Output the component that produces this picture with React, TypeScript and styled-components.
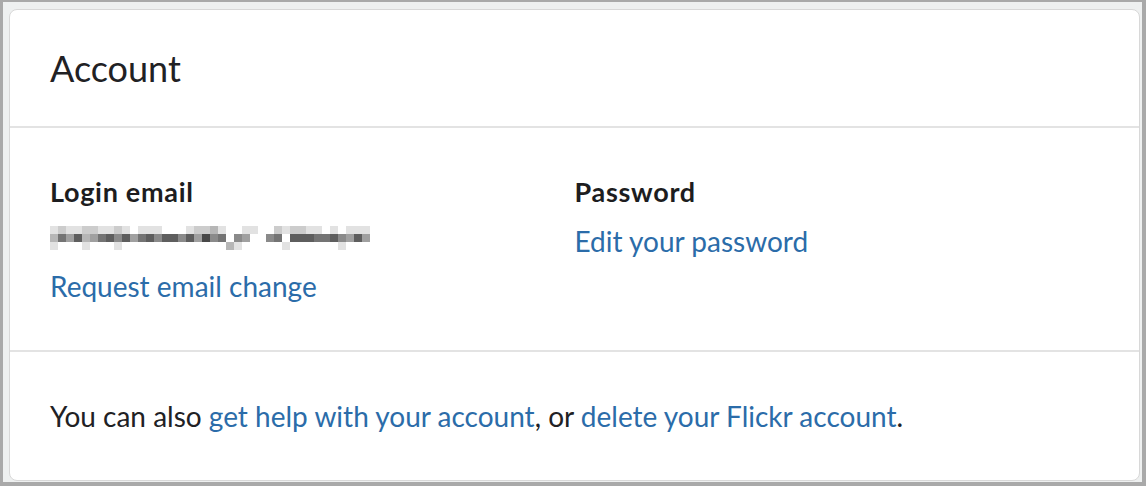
import React from 'react';
import styled, { createGlobalStyle } from 'styled-components';

const Global = createGlobalStyle`
  html, body { margin: 0; padding: 0; background: #ffffff; }
  body { font-family: Lato, "Open Sans", Arial, sans-serif; color: #212124; }
`;

const Frame = styled.div`
  box-sizing: border-box;
  width: 1146px;
  height: 486px;
  background: #eef0f0;
  border-style: solid;
  border-color: #a9a9a9;
  border-width: 2px 4px 4px 3px;
  padding: 7px 2px 1px 6px;
  display: flex;
`;

const Card = styled.section`
  flex: 1;
  display: flex;
  flex-direction: column;
  background: #ffffff;
  border: 1px solid #d8d8d8;
  border-radius: 8px;
  overflow: hidden;
`;

const Header = styled.header`
  height: 116px;
  display: flex;
  align-items: center;
  padding: 0 40px;
  border-bottom: 2px solid #e3e3e3;
`;

const Title = styled.h1`
  margin: 0;
  font-size: 36px;
  font-weight: 400;
  color: #212124;
`;

const Details = styled.div`
  height: 224px;
  box-sizing: border-box;
  display: grid;
  grid-template-columns: 1fr 1fr;
  padding: 49px 40px 0 40px;
  border-bottom: 2px solid #e3e3e3;
`;

const Column = styled.div`
  display: flex;
  flex-direction: column;
  align-items: flex-start;
`;

const Label = styled.h2`
  margin: 0;
  font-size: 27px;
  line-height: 30px;
  font-weight: 700;
  letter-spacing: 0.7px;
  color: #1d1d20;
`;

const Link = styled.a<{ $top?: number }>`
  display: inline-block;
  margin-top: ${(p) => p.$top ?? 0}px;
  font-size: 28px;
  line-height: 34px;
  color: #2b6ca9;
  text-decoration: none;
`;

const Footer = styled.footer`
  flex: 1;
  display: flex;
  align-items: center;
  padding: 0 40px;
`;

const Sentence = styled.p`
  margin: 0;
  font-size: 28px;
  color: #212124;
`;

const Inline = styled.a`
  color: #2b6ca9;
  text-decoration: none;
`;

const PixelBox = styled.svg`
  display: block;
  margin-top: 19px;
`;

const rows = [
  '1211221121011100012231001100212211010111',
  '3647346757467577574856054005607776675474',
  '1000100010000000000000310000010000001000',
];

const Pixelated: React.FC = () => (
  <PixelBox width={320} height={24} viewBox="0 0 320 24" aria-hidden="true">
    {rows.map((row, r) =>
      row.split('').map((c, i) => {
        const v = Number(c);
        if (!v) return null;
        const g = Math.round(248 - v * 22);
        return (
          <rect key={`${r}-${i}`} x={i * 8} y={r * 8} width={8} height={8} fill={`rgb(${g},${g},${g})`} />
        );
      })
    )}
  </PixelBox>
);

export default function App() {
  return (
    <>
      <Global />
      <Frame>
        <Card>
          <Header>
            <Title>Account</Title>
          </Header>
          <Details>
            <Column>
              <Label>Login email</Label>
              <Pixelated />
              <Link href="#" $top={19}>Request email change</Link>
            </Column>
            <Column>
              <Label>Password</Label>
              <Link href="#" $top={17}>Edit your password</Link>
            </Column>
          </Details>
          <Footer>
            <Sentence>
              You can also <Inline href="#">get help with your account</Inline>, or{' '}
              <Inline href="#">delete your Flickr account</Inline>.
            </Sentence>
          </Footer>
        </Card>
      </Frame>
    </>
  );
}
